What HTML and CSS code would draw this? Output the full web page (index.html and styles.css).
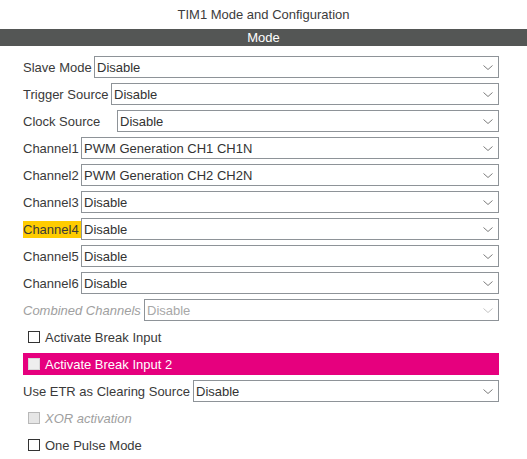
FILE: index.html
```html
<!DOCTYPE html>
<html>
<head>
<meta charset="utf-8">
<link rel="stylesheet" href="styles.css">
</head>
<body>
<div class="title">TIM1 Mode and Configuration</div>
<div class="bar">Mode</div>
<div class="form">
  <div class="row"><span class="label w-slave">Slave Mode</span><div class="select"><span>Disable</span><svg class="chev" viewBox="0 0 10 5"><path d="M0.5 0.5 L5 4.5 L9.5 0.5"/></svg></div></div>
  <div class="row"><span class="label w-trig">Trigger Source</span><div class="select"><span>Disable</span><svg class="chev" viewBox="0 0 10 5"><path d="M0.5 0.5 L5 4.5 L9.5 0.5"/></svg></div></div>
  <div class="row"><span class="label w-clock">Clock Source</span><div class="select"><span>Disable</span><svg class="chev" viewBox="0 0 10 5"><path d="M0.5 0.5 L5 4.5 L9.5 0.5"/></svg></div></div>
  <div class="row"><span class="label w-ch">Channel1</span><div class="select"><span>PWM Generation CH1 CH1N</span><svg class="chev" viewBox="0 0 10 5"><path d="M0.5 0.5 L5 4.5 L9.5 0.5"/></svg></div></div>
  <div class="row"><span class="label w-ch">Channel2</span><div class="select"><span>PWM Generation CH2 CH2N</span><svg class="chev" viewBox="0 0 10 5"><path d="M0.5 0.5 L5 4.5 L9.5 0.5"/></svg></div></div>
  <div class="row"><span class="label w-ch">Channel3</span><div class="select"><span>Disable</span><svg class="chev" viewBox="0 0 10 5"><path d="M0.5 0.5 L5 4.5 L9.5 0.5"/></svg></div></div>
  <div class="row"><span class="label w-ch hl">Channel4</span><div class="select"><span>Disable</span><svg class="chev" viewBox="0 0 10 5"><path d="M0.5 0.5 L5 4.5 L9.5 0.5"/></svg></div></div>
  <div class="row"><span class="label w-ch">Channel5</span><div class="select"><span>Disable</span><svg class="chev" viewBox="0 0 10 5"><path d="M0.5 0.5 L5 4.5 L9.5 0.5"/></svg></div></div>
  <div class="row"><span class="label w-ch">Channel6</span><div class="select"><span>Disable</span><svg class="chev" viewBox="0 0 10 5"><path d="M0.5 0.5 L5 4.5 L9.5 0.5"/></svg></div></div>
  <div class="row disabled"><span class="label w-comb">Combined Channels</span><div class="select"><span>Disable</span><svg class="chev" viewBox="0 0 10 5"><path d="M0.5 0.5 L5 4.5 L9.5 0.5"/></svg></div></div>
  <div class="row check"><span class="box"></span><span>Activate Break Input</span></div>
  <div class="row check pink"><span class="box"></span><span>Activate Break Input 2</span></div>
  <div class="row"><span class="label w-etr">Use ETR as Clearing Source</span><div class="select"><span>Disable</span><svg class="chev" viewBox="0 0 10 5"><path d="M0.5 0.5 L5 4.5 L9.5 0.5"/></svg></div></div>
  <div class="row check disabled"><span class="box"></span><span class="it">XOR activation</span></div>
  <div class="row check"><span class="box"></span><span>One Pulse Mode</span></div>
</div>
</body>
</html>
```
FILE: styles.css
```css
html, body {
  margin: 0;
  padding: 0;
  background: #ffffff;
}
body {
  font-family: "Liberation Sans", Arial, sans-serif;
  font-size: 13px;
  color: #3a3a3a;
}
.title {
  height: 29px;
  line-height: 30px;
  text-align: center;
  color: #3c3c3c;
}
.bar {
  height: 17px;
  line-height: 17px;
  background: #545655;
  color: #ffffff;
  text-align: center;
}
.form {
  padding: 10px 28px 0 23px;
  display: flex;
  flex-direction: column;
  gap: 5px;
}
.row {
  display: flex;
  align-items: center;
  height: 22px;
}
.label {
  flex: none;
  line-height: 17px;
  white-space: nowrap;
}
.w-slave { width: 71px; }
.w-trig { width: 88px; }
.w-clock { width: 94px; }
.w-ch { width: 58px; }
.w-comb { width: 121px; }
.w-etr { width: 170px; }
.hl { background: #ffcc00; }
.select {
  flex: 1;
  height: 22px;
  box-sizing: border-box;
  border: 1px solid #8e9398;
  display: flex;
  align-items: center;
  justify-content: space-between;
  padding: 0 5px 0 2px;
  color: #333333;
}
.chev {
  width: 10px;
  height: 5px;
  fill: none;
  stroke: #7c7c7c;
  stroke-width: 1;
}
.disabled .label {
  font-style: italic;
  color: #a0a0a0;
}
.disabled .select {
  color: #a8a8a8;
}
.disabled .chev {
  stroke: #c4c4c4;
}
.check {
  padding-left: 5px;
  gap: 5px;
}
.box {
  width: 12px;
  height: 12px;
  box-sizing: border-box;
  border: 1px solid #333333;
  background: #ffffff;
  flex: none;
}
.pink {
  background: #e6007e;
  color: #ffffff;
}
.pink .box {
  border-color: #d8d8d8;
  background: #eeeeee;
}
.disabled .box {
  border-color: #b8b8b8;
  background: #e6e6e6;
}
.it {
  font-style: italic;
  color: #a0a0a0;
}
```
